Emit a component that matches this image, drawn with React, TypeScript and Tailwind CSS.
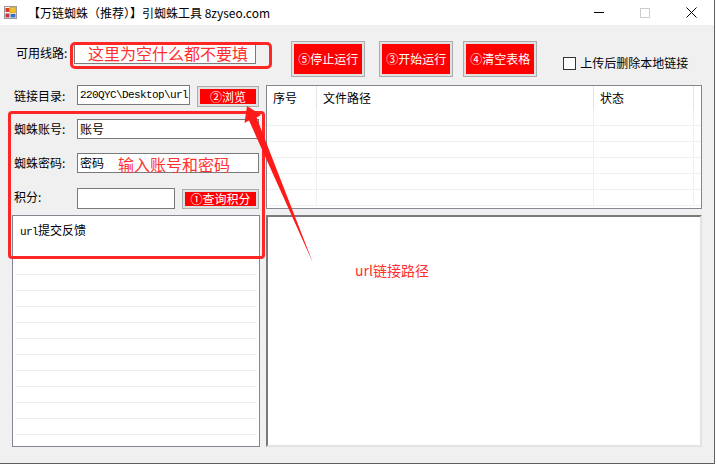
import React from "react";

function RedButton({ label, className }: { label: string; className: string }) {
  return (
    <div className={`flex border border-[#adadad] bg-[#e1e1e1] p-[2px] ${className}`}>
      <div className="flex flex-1 items-center justify-center bg-[#ff0000] text-[12px] leading-none text-white">
        {label}
      </div>
    </div>
  );
}

function TextBox({ className, children }: { className: string; children?: React.ReactNode }) {
  return (
    <div className={`flex items-center overflow-hidden whitespace-nowrap border border-[#7a7a7a] bg-white pl-[2px] text-[12px] leading-[16px] text-black ${className}`}>
      {children}
    </div>
  );
}

function AppIcon() {
  return (
    <svg width="13" height="13" viewBox="0 0 13 13">
      <rect x="0.5" y="0.5" width="12" height="12" fill="#f4f4f4" stroke="#9a9a9a" />
      <rect x="1.5" y="2" width="4" height="4" fill="#d83b2a" />
      <rect x="6" y="1.5" width="5.5" height="5.5" fill="#f2c230" stroke="#c8931a" strokeWidth="0.6" />
      <rect x="1.5" y="7.5" width="4" height="4" fill="#c43a3a" />
      <rect x="6.5" y="8" width="5" height="3.5" fill="#3a6fd0" />
    </svg>
  );
}

const rows = [0, 1, 2, 3, 4, 5];
const feedLines = Array.from({ length: 12 }, (_, i) => i);

export default function App() {
  return (
    <div className="relative h-[464px] w-[717px] overflow-hidden bg-white font-['Noto_Sans_CJK_SC',sans-serif] text-black">
      <div className="flex h-[464px] w-[715px] flex-col border-r border-b border-[#5f5f5f]">
        {/* title bar */}
        <div className="flex h-[25px] items-center bg-white">
          <div className="ml-[4px] flex">
            <AppIcon />
          </div>
          <div className="ml-[11px] text-[12px] leading-[16px]">【万链蜘蛛（推荐）】引蜘蛛工具 8zyseo.com</div>
          <div className="ml-auto flex">
            <div className="flex h-[25px] w-[46px] items-center justify-center">
              <div className="h-px w-[10px] bg-black" />
            </div>
            <div className="flex h-[25px] w-[46px] items-center justify-center">
              <div className="h-[10px] w-[10px] border border-[#cccccc]" />
            </div>
            <div className="flex h-[25px] w-[46px] items-center justify-center">
              <svg width="11" height="11" viewBox="0 0 11 11">
                <path d="M0.5 0.5 L10.5 10.5 M10.5 0.5 L0.5 10.5" stroke="#000" strokeWidth="1" />
              </svg>
            </div>
          </div>
        </div>

        {/* body */}
        <div className="flex flex-1 flex-col bg-[#f0f0f0]">
          {/* top row */}
          <div className="mt-[16px] flex h-[36px] items-start">
            <div className="ml-[16px] mt-[4px] text-[12px] leading-[16px]">可用线路:</div>
            <TextBox className="ml-[7px] mt-[3px] h-[20px] w-[182px]" />
            <RedButton label="⑤停止运行" className="ml-[35px] h-[36px] w-[74px]" />
            <RedButton label="③开始运行" className="ml-[14px] h-[36px] w-[74px]" />
            <RedButton label="④清空表格" className="ml-[10px] h-[36px] w-[74px]" />
            <div className="ml-[26px] mt-[16px] h-[13px] w-[13px] border border-[#333333] bg-white" />
            <div className="ml-[4px] mt-[14px] text-[12px] leading-[16px]">上传后删除本地链接</div>
          </div>

          {/* main */}
          <div className="mt-[8px] flex">
            {/* left column */}
            <div className="ml-[12px] flex w-[248px] flex-col">
              <div className="flex h-[22px] items-start">
                <div className="ml-[2px] mt-[3px] w-[63px] text-[12px] leading-[16px]">链接目录:</div>
                <TextBox className="h-[20px] w-[113px]">
                  <span className="font-['Liberation_Mono',monospace] text-[11px] tracking-[-0.6px]">220QYC\Desktop\url</span>
                </TextBox>
                <RedButton label="②浏览" className="ml-[7px] mt-[1px] h-[21px] w-[62px]" />
              </div>
              <div className="mt-[12px] flex h-[20px] items-center">
                <div className="ml-[2px] w-[63px] text-[12px] leading-[16px]">蜘蛛账号:</div>
                <TextBox className="h-[20px] w-[182px]">账号</TextBox>
              </div>
              <div className="mt-[14px] flex h-[20px] items-center">
                <div className="ml-[2px] w-[63px] text-[12px] leading-[16px]">蜘蛛密码:</div>
                <TextBox className="h-[20px] w-[182px]">密码</TextBox>
              </div>
              <div className="mt-[15px] flex h-[21px] items-start">
                <div className="ml-[2px] mt-[1px] w-[63px] text-[12px] leading-[16px]">积分:</div>
                <TextBox className="h-[21px] w-[98px]" />
                <RedButton label="①查询积分" className="ml-[7px] mt-[1px] h-[20px] w-[77px]" />
              </div>
              <div className="mt-[6px] flex h-[232px] flex-col overflow-hidden border border-[#828790] bg-white">
                <div className="pl-[7px] pt-[6px] text-[12px] leading-[16px]">
                  <span className="font-['Liberation_Mono',monospace] text-[11px] tracking-[-0.6px]">url</span>提交反馈
                </div>
                <div className="mx-[2px] mt-[18px] flex flex-col">
                  {feedLines.map((i) => (
                    <div key={i} className="h-[16px] border-t border-[#ececec]" />
                  ))}
                </div>
              </div>
            </div>

            {/* right column */}
            <div className="ml-[6px] flex w-[436px] flex-col">
              <div className="flex h-[124px] flex-col overflow-hidden border border-[#828790] bg-white">
                <div className="flex h-[24px] text-[12px] leading-[24px]">
                  <div className="w-[50px] border-r border-[#e5e5e5] pl-[6px]">序号</div>
                  <div className="w-[277px] border-r border-[#e5e5e5] pl-[6px]">文件路径</div>
                  <div className="w-[100px] border-r border-[#e5e5e5] pl-[6px]">状态</div>
                  <div className="flex-1" />
                </div>
                {rows.map((r) => (
                  <div key={r} className="flex h-[16px] border-b border-[#f0f0f0]">
                    <div className="w-[50px] border-r border-[#f0f0f0]" />
                    <div className="w-[277px] border-r border-[#f0f0f0]" />
                    <div className="w-[100px] border-r border-[#f0f0f0]" />
                    <div className="flex-1" />
                  </div>
                ))}
              </div>
              <div className="mt-[6px] h-[232px] border-2 border-t-[#7a7a7a] border-l-[#7a7a7a] border-r-[#e3e3e3] border-b-[#e3e3e3] bg-white" />
            </div>
          </div>
        </div>
      </div>

      {/* annotations drawn over the window */}
      <div className="pointer-events-none absolute left-[70px] top-[42px] h-[27px] w-[202px] rounded-[5px] border-[3px] border-[#ff2626]" />
      <div className="pointer-events-none absolute left-[88px] top-[44px] text-[16px] leading-[18px] text-[#ff3030]">
        这里为空什么都不要填
      </div>
      <div className="pointer-events-none absolute left-[8px] top-[111px] h-[148px] w-[257px] rounded-[4px] border-[3px] border-[#ff2626]" />
      <div className="pointer-events-none absolute left-[118px] top-[155px] text-[16px] leading-[18px] text-[#ff3030]">
        输入账号和密码
      </div>
      <div className="pointer-events-none absolute left-[355px] top-[261px] text-[14px] leading-[18px] text-[#ff3030]">
        url链接路径
      </div>
      <svg className="pointer-events-none absolute left-0 top-0" width="717" height="464" viewBox="0 0 717 464">
        <polygon points="247,106 261,115 256.5,117.5 313,263 249,120.5 244.5,123" fill="#ff1a1a" />
      </svg>
    </div>
  );
}
